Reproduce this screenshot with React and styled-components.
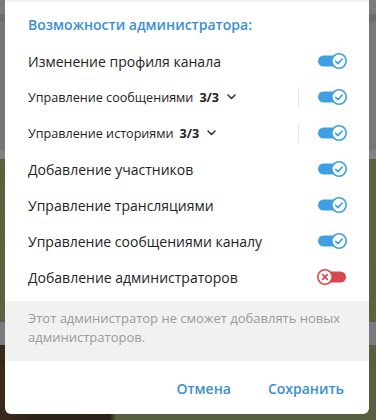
import React from "react";
import styled, { createGlobalStyle } from "styled-components";

const GlobalStyle = createGlobalStyle`
  html, body {
    margin: 0;
    padding: 0;
  }
  body {
    font-family: "Open Sans", "Noto Sans", sans-serif;
    -webkit-font-smoothing: antialiased;
  }
`;

// dimmed chat window behind the dialog
const Backdrop = styled.div`
  width: 376px;
  height: 420px;
  box-sizing: border-box;
  padding: 0 7px 6px 5px;
  background:
    linear-gradient(90deg, #3a2a1c 0, #2c2218 40px, #2a2118 110px, transparent 116px) 0 345px / 376px 75px no-repeat,
    linear-gradient(#7b7b7b 0, #7b7b7b 14px, #6d6d6d 14px, #6d6d6d 22px, #777 22px, #777 150px, #818181 150px, #818181 159px, #58623f 159px, #5a6442 322px, #7a7a80 322px, #7a7a80 345px, #56603e 345px);
  display: flex;
  flex-direction: column;
`;

const Dialog = styled.div`
  width: 364px;
  height: 414px;
  background: #fff;
  border-radius: 0 0 6px 6px;
  border-top: 2px solid #f1f1f1;
  box-sizing: border-box;
  display: flex;
  flex-direction: column;
  overflow: hidden;
`;

const Title = styled.div`
  height: 37px;
  padding: 4px 23px 0;
  display: flex;
  align-items: center;
  font-size: 14px;
  font-weight: 600;
  color: #3a8fcf;
`;

const List = styled.div`
  display: flex;
  flex-direction: column;
  padding-bottom: 6px;
`;

const Row = styled.div`
  height: 36px;
  display: flex;
  align-items: center;
  padding: 0 22px 0 23px;
`;

const Label = styled.div`
  flex: 1;
  display: flex;
  align-items: center;
  font-size: ${(p) => (p.$small ? "12.6px" : "14px")};
  color: #232323;
  white-space: nowrap;
`;

const Count = styled.span`
  font-weight: 700;
  margin-left: 6px;
`;

const Chevron = styled.svg`
  margin-left: 8px;
  width: 9px;
  height: 6px;
`;

const Divider = styled.div`
  width: 1px;
  height: 20px;
  background: #e6e6e6;
  margin-right: 16px;
`;

const ToggleIcon = styled.svg`
  width: 32px;
  height: 18px;
  flex-shrink: 0;
`;

const Note = styled.div`
  background: #f1f1f1;
  height: 60px;
  box-sizing: border-box;
  padding: 8px 23px 0;
  font-size: 13px;
  line-height: 19px;
  color: #9a9a9a;
`;

const Footer = styled.div`
  flex: 1;
  display: flex;
  align-items: center;
  justify-content: flex-end;
  gap: 37px;
  padding: 2px 25px 0 0;
`;

const Button = styled.button`
  border: none;
  background: none;
  padding: 0;
  font-family: inherit;
  font-size: 14px;
  font-weight: 600;
  color: #3a8fcf;
  cursor: pointer;
`;

const Toggle = ({ on }) =>
  on ? (
    <ToggleIcon viewBox="0 0 32 18">
      <rect x="3" y="3.5" width="24" height="11" rx="5.5" fill="#3e9fe2" />
      <circle cx="24" cy="9" r="7.2" fill="#fff" stroke="#3e9fe2" strokeWidth="1.6" />
      <path d="M20.6 9.3 L23 11.6 L27.2 7" fill="none" stroke="#3e9fe2" strokeWidth="1.6" strokeLinecap="round" strokeLinejoin="round" />
    </ToggleIcon>
  ) : (
    <ToggleIcon viewBox="0 0 32 18">
      <rect x="8" y="3.5" width="23" height="11" rx="5.5" fill="#d9484e" />
      <circle cx="10" cy="9" r="7.2" fill="#fff" stroke="#d9484e" strokeWidth="1.6" />
      <path d="M7.7 6.7 L12.3 11.3 M12.3 6.7 L7.7 11.3" fill="none" stroke="#d9484e" strokeWidth="1.7" strokeLinecap="round" />
    </ToggleIcon>
  );

const rights = [
  { label: "Изменение профиля канала", on: true },
  { label: "Управление сообщениями", count: "3/3", on: true },
  { label: "Управление историями", count: "3/3", on: true },
  { label: "Добавление участников", on: true },
  { label: "Управление трансляциями", on: true },
  { label: "Управление сообщениями каналу", on: true },
  { label: "Добавление администраторов", on: false },
];

const App = () => (
  <>
    <GlobalStyle />
    <Backdrop>
      <Dialog>
        <Title>Возможности администратора:</Title>
        <List>
          {rights.map((r) => (
            <Row key={r.label}>
              <Label $small={!!r.count}>
                {r.label}
                {r.count && (
                  <>
                    <Count>{r.count}</Count>
                    <Chevron viewBox="0 0 9 6">
                      <path d="M1 1 L4.5 4.5 L8 1" fill="none" stroke="#333" strokeWidth="1.5" strokeLinecap="round" strokeLinejoin="round" />
                    </Chevron>
                  </>
                )}
              </Label>
              {r.count && <Divider />}
              <Toggle on={r.on} />
            </Row>
          ))}
        </List>
        <Note>
          Этот администратор не сможет добавлять новых
          <br />
          администраторов.
        </Note>
        <Footer>
          <Button>Отмена</Button>
          <Button>Сохранить</Button>
        </Footer>
      </Dialog>
    </Backdrop>
  </>
);

export default App;
